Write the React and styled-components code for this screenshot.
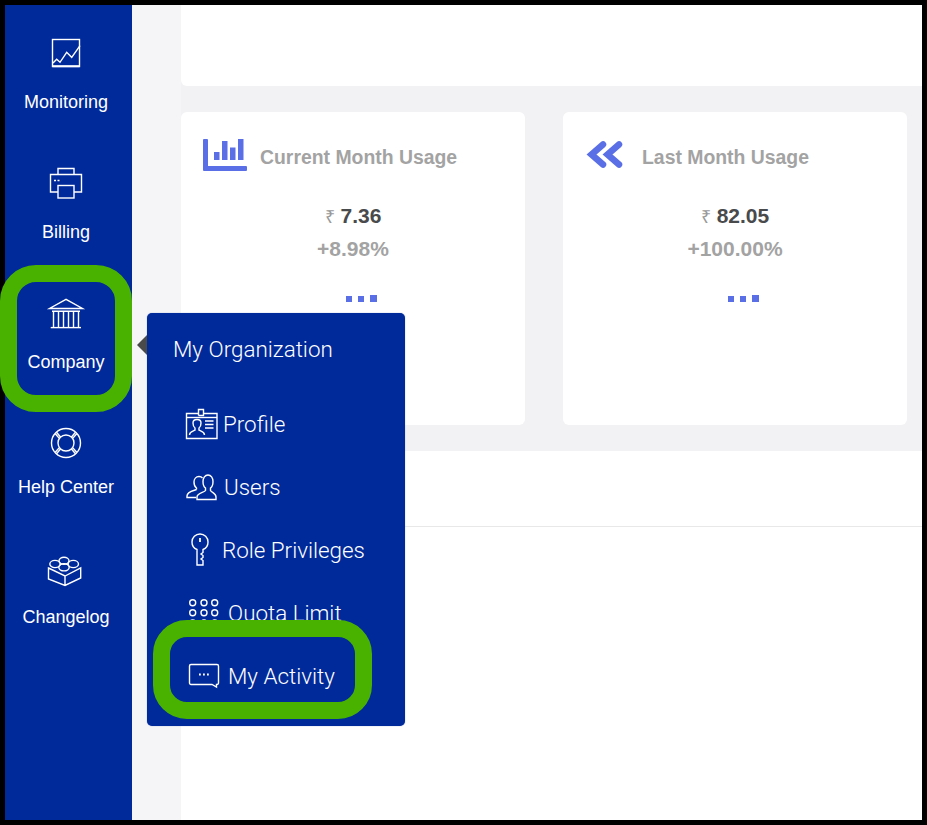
import React from "react";
import styled, { createGlobalStyle } from "styled-components";

const BLUE = "#002a9a";
const ACCENT = "#5a6fe6";
const GREEN = "#49b200";

const GlobalStyle = createGlobalStyle`
  html, body {
    margin: 0;
    background: #000;
  }
  * {
    box-sizing: border-box;
  }
`;

const sideIcons = {
  monitoring: (
    <>
      <rect x="4.500" y="4.500" width="27" height="27" />
      <path d="M4.500 31.200h27" strokeWidth="2" />
      <path d="M5 28l3.700-3.700 3.300 3 6.700-10 5 5L32 10.700" />
    </>
  ),
  billing: (
    <>
      <path d="M10 9V3.500h16V9" />
      <path d="M10 27H2.500V9.500h31V27H26" />
      <rect x="10" y="20.500" width="16" height="12.500" />
      <path d="M6 15.500h2M9.500 15.500h2" strokeWidth="1.600" />
    </>
  ),
  company: (
    <>
      <path d="M18 4.300L1.500 13.500h33zM4 16.200h28" />
      <path d="M5.500 16.500v15.500M10.500 16.500v15.500M15.500 16.500v15.500M20.500 16.500v15.500M25.500 16.500v15.500M30.500 16.500v15.500" />
      <path d="M2.700 32.600H33" />
    </>
  ),
  help: (
    <>
      <circle cx="18" cy="18" r="14.500" />
      <circle cx="18" cy="18" r="8" />
      <path d="M8.500 7.300l4.200 5M7.300 8.800l4 4.600M27.500 7.300l-4.200 5M28.700 8.800l-4 4.600M8.500 28.700l4.200-5M7.300 27.200l4-4.600M27.500 28.700l-4.200-5M28.700 27.200l-4-4.600" />
    </>
  ),
  changelog: (
    <>
      <path d="M.5 13L17 21l15.700-8v10L17 30.500.5 24zM17 21v9.500" />
      <ellipse cx="7" cy="9" rx="5.200" ry="3.600" />
      <ellipse cx="25.300" cy="9" rx="5.200" ry="3.600" />
      <ellipse cx="16" cy="5.700" rx="5" ry="3.500" />
      <ellipse cx="16" cy="12.300" rx="5.200" ry="3.600" />
    </>
  ),
};

const menuIcons = {
  profile: (
    <>
      <path d="M12.500 7.500H0.500V32.500H31V7.500H18" />
      <path d="M12.500 9.500V3.500H17.500V9.500H12.500" />
      <path d="M0.500 11.500H31" />
      <path d="M3.500 29c0-3 3-3.500 5.500-4.800v-2.200c-1.500-1-2-3-2-5 0-2.500 2-3.500 4-3.500s4 1 4 3.500c0 2-.5 4-2 5v2.200c2.500 1.300 5.500 1.800 5.500 4.800" />
      <path d="M19 15h8.500M19 18.500h8.500M19 22h8.500" />
    </>
  ),
  users: (
    <g transform="translate(0 -2)">
      <path d="M10.500 22.500c-2 1-9.500 2-9.500 6.500v1.500h9" />
      <path d="M10.500 22.500v-1.500c-1.500-1-2.500-3.500-2.500-6 0-3 2-5.500 5-5.500 1.500 0 2.700.5 3.500 1.500" />
      <path d="M11 32.500V30c0-4 7.500-4.500 8.500-6.500v-2.500c-1.500-1-2.500-3.500-2.500-6.500 0-3.500 2-6.500 5-6.500s5 3 5 6.500c0 3-1 5.500-2.500 6.500v2.500c1 2 5.500 2.500 5.500 6.500v2.500z" />
    </g>
  ),
  role: (
    <>
      <path d="M11 17.500C8 16.500 6 13.500 6 10a8 8 0 0 1 16 0c0 3.500-2 6.500-5 7.500v3l-2 1.500 2 1.500v2l-2 1.500 2 1.500V33h-6z" />
      <path d="M14 6v4" strokeWidth="1.800" />
    </>
  ),
  quota: (
    <>
      <circle cx="6.700" cy="7.700" r="3" />
      <circle cx="18" cy="7.700" r="3" />
      <circle cx="28.700" cy="7.700" r="3" />
      <circle cx="6.700" cy="17.700" r="3" />
      <circle cx="18" cy="17.700" r="3" />
      <circle cx="28.700" cy="17.700" r="3" />
      <circle cx="6.700" cy="28" r="3" />
      <circle cx="18" cy="28" r="3" />
      <circle cx="28.700" cy="28" r="3" />
    </>
  ),
  activity: (
    <>
      <path d="M5 6.500h26a1.500 1.500 0 0 1 1.500 1.500v17a1.500 1.500 0 0 1-1.500 1.500h-.5V29L26 26.500H5A1.500 1.500 0 0 1 3.500 25V8A1.500 1.500 0 0 1 5 6.500z" />
      <path d="M13 16.500h1.800M17 16.500h1.800M21 16.500h1.800" strokeWidth="1.800" />
    </>
  ),
};

const navItems = [
  { key: "monitoring", label: "Monitoring", gap: 21 },
  { key: "billing", label: "Billing", gap: 21 },
  { key: "company", label: "Company", gap: 21, ringed: true },
  { key: "help", label: "Help Center", gap: 16 },
  { key: "changelog", label: "Changelog", gap: 16 },
];

const menuItems = [
  { key: "profile", label: "Profile", gap: 5 },
  { key: "users", label: "Users", gap: 6 },
  { key: "role", label: "Role Privileges", gap: 4 },
  { key: "quota", label: "Quota Limit", gap: 10 },
  { key: "activity", label: "My Activity", gap: 10, ringed: true },
];

const usage = [
  { title: "Current Month Usage", amount: "7.36", change: "+8.98%", icon: "bars" },
  { title: "Last Month Usage", amount: "82.05", change: "+100.00%", icon: "back" },
];

const App = () => {
  return (
    <>
      <GlobalStyle />
      <Frame>
        <Shell>
          <Sidebar>
            {navItems.map((item) => (
              <NavItem key={item.key}>
                <LineIcon width="36" height="36" viewBox="0 0 36 36">
                  {sideIcons[item.key]}
                </LineIcon>
                <NavLabel $gap={item.gap}>{item.label}</NavLabel>
                {item.ringed && <CompanyRing />}
              </NavItem>
            ))}
          </Sidebar>
          <Strip />
          <Main>
            <TopCard />
            <UsageRow>
              {usage.map((card) => (
                <UsageCard key={card.title}>
                  <CardHeader>
                    <svg width="44" height="32" viewBox="0 0 44 32">
                      {card.icon === "bars" ? (
                        <g fill={ACCENT}>
                          <path d="M0 1a1 1 0 0 1 1-1h3a1 1 0 0 1 1 1v26h38a1 1 0 0 1 1 1v3a1 1 0 0 1-1 1H1a1 1 0 0 1-1-1z" />
                          <rect x="11" y="13" width="5.500" height="8" />
                          <rect x="19" y="2" width="5.500" height="19" />
                          <rect x="27" y="8.500" width="5.500" height="12.500" />
                          <rect x="35" y="0" width="5.500" height="21" />
                        </g>
                      ) : (
                        <g fill="none" stroke={ACCENT} strokeWidth="6.500" strokeLinecap="round">
                          <path d="M18 5.500L6.500 15.500 18 25.500" />
                          <path d="M34 5.500L22.500 15.500 34 25.500" />
                        </g>
                      )}
                    </svg>
                    <CardTitle>{card.title}</CardTitle>
                  </CardHeader>
                  <Amount>
                    <Rupee>₹</Rupee> {card.amount}
                  </Amount>
                  <Change>{card.change}</Change>
                  <Dots>
                    <Dot />
                    <Dot />
                    <Dot $big />
                  </Dots>
                </UsageCard>
              ))}
            </UsageRow>
            <Panel>
              <PanelHeader />
            </Panel>
          </Main>
          <Flyout>
            <FlyoutArrow />
            <FlyoutTitle>My Organization</FlyoutTitle>
            {menuItems.map((item) => (
              <MenuItem key={item.key} $gap={item.gap}>
                <LineIcon width="32" height="36" viewBox="0 0 32 36">
                  {menuIcons[item.key]}
                </LineIcon>
                <span>{item.label}</span>
                {item.ringed && <ActivityRing />}
              </MenuItem>
            ))}
          </Flyout>
        </Shell>
      </Frame>
    </>
  );
};

const Frame = styled.div`
  width: 927px;
  height: 825px;
  padding: 5px;
  background: #000;
  overflow: hidden;
`;

const Shell = styled.div`
  position: relative;
  display: flex;
  width: 917px;
  height: 815px;
  background: #fff;
`;

const Sidebar = styled.nav`
  flex: 0 0 127px;
  padding: 30px 5px 0 0;
  background: ${BLUE};
`;

const NavItem = styled.div`
  position: relative;
  display: flex;
  flex-direction: column;
  align-items: center;
  height: 130px;
`;

const LineIcon = styled.svg`
  flex: none;
  overflow: visible;
  fill: none;
  stroke: #fff;
  stroke-width: 1.4;
`;

const NavLabel = styled.span`
  margin-top: ${(props) => props.$gap}px;
  color: #fff;
  font: 18px/20px "Liberation Sans", Arial, sans-serif;
`;

const Ring = styled.div`
  position: absolute;
  border: 17px solid ${GREEN};
  pointer-events: none;
`;

const CompanyRing = styled(Ring)`
  top: -30px;
  left: -5px;
  width: 132px;
  height: 147px;
  border-radius: 36px;
`;

const ActivityRing = styled(Ring)`
  top: -24px;
  left: -20px;
  width: 219px;
  height: 99px;
  border-radius: 34px;
`;

const Strip = styled.div`
  flex: 0 0 49px;
  background: #f5f5f8;
`;

const Main = styled.main`
  flex: 1;
  display: flex;
  flex-direction: column;
  min-width: 0;
  background: #f2f2f5;
`;

const TopCard = styled.div`
  height: 81px;
  background: #fff;
  border-bottom-left-radius: 6px;
`;

const UsageRow = styled.section`
  display: flex;
  gap: 38px;
  padding: 26px 0;
`;

const UsageCard = styled.article`
  display: flex;
  flex-direction: column;
  align-items: center;
  width: 344px;
  height: 313px;
  padding-top: 27px;
  background: #fff;
  border-radius: 6px;
`;

const CardHeader = styled.header`
  display: flex;
  align-self: flex-start;
  gap: 13px;
  padding-left: 22px;
`;

const CardTitle = styled.h3`
  margin: 0;
  padding-top: 6px;
  color: #a3a3a3;
  font: bold 19.4px/24px "Liberation Sans", Arial, sans-serif;
`;

const Amount = styled.div`
  margin-top: 33px;
  color: #484a4c;
  font: bold 21px/24px "Liberation Sans", Arial, sans-serif;
`;

const Rupee = styled.span`
  color: #999;
  font-size: 18px;
  font-weight: normal;
`;

const Change = styled.div`
  margin-top: 8px;
  color: #a3a3a3;
  font: bold 21px/24px "Liberation Sans", Arial, sans-serif;
`;

const Dots = styled.div`
  display: flex;
  align-items: center;
  gap: 6px;
  margin: 34px 0 0 16px;
`;

const Dot = styled.i`
  display: block;
  width: ${(props) => (props.$big ? 7 : 6)}px;
  height: ${(props) => (props.$big ? 7 : 6)}px;
  background: ${ACCENT};
`;

const Panel = styled.section`
  flex: 1;
  background: #fff;
`;

const PanelHeader = styled.div`
  height: 76px;
  border-bottom: 1px solid #e8e8e8;
`;

const Flyout = styled.aside`
  position: absolute;
  top: 308px;
  left: 142px;
  width: 258px;
  height: 413px;
  padding: 21px 0 0 26px;
  background: ${BLUE};
  border-radius: 5px;
  box-shadow: 0 0 1px rgba(0, 42, 154, 0.6);
  color: #fff;
  font-family: Roboto, "Liberation Sans", sans-serif;
  font-weight: 300;
`;

const FlyoutArrow = styled.span`
  position: absolute;
  top: 22px;
  left: -10px;
  border-style: solid;
  border-width: 10px 10px 10px 0;
  border-color: transparent #4a4a4a transparent transparent;
`;

const FlyoutTitle = styled.div`
  margin-bottom: 28px;
  font-size: 22.4px;
  line-height: 30px;
`;

const MenuItem = styled.div`
  position: relative;
  display: flex;
  align-items: center;
  gap: ${(props) => props.$gap}px;
  height: 63px;
  padding-left: 13px;
  font-size: 22.4px;
`;

export default App;
